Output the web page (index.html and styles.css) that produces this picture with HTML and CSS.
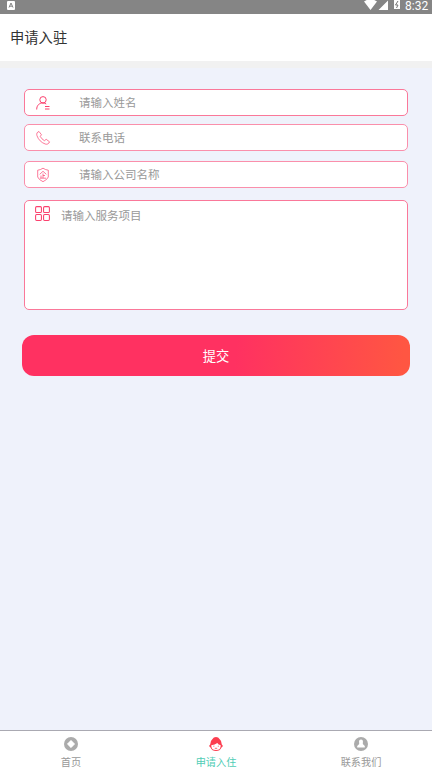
FILE: index.html
```html
<!DOCTYPE html>
<html lang="zh-CN">
<head>
<meta charset="utf-8">
<title>申请入驻</title>
<link rel="stylesheet" href="styles.css">
</head>
<body>
<div class="status">
  <svg class="app" width="8" height="9" viewBox="0 0 8 9"><rect width="8" height="9" rx="1" fill="#fff"/><path d="M2 6.500 4 2l2 4.500M2.800 5.200h2.400" fill="none" stroke="#858585"/></svg>
  <svg width="41" height="14" viewBox="0 0 41 14" class="signals">
    <path d="M0 1.500Q6.500-3 13 1.500L6.500 10zM14.500 10 24 .5V10z" fill="#fff"/>
    <path d="M30 0h6v9h-6z" fill="#fff"/><path d="m34 1-2.500 4H34l-1.500 3" fill="none" stroke="#777"/>
  </svg>
  <span class="time">8:32</span>
</div>
<header class="header">申请入驻</header>
<main class="main">
  <div class="field">
    <svg class="icon" viewBox="0 0 16 16"><circle cx="8" cy="4.800" r="3.200"/><path d="M1.700 14.500C1.700 10.500 4 8 8 8q2 0 3.200 1M10 11.500h4.500M10 14h4.500"/></svg>
    <span>请输入姓名</span>
  </div>
  <div class="field phone">
    <svg class="icon thin" viewBox="0 0 16 16"><path d="M4 1.500C2.200 2 1.200 3.500 2 5.800c1.500 4 4.200 6.700 8.200 8.200 2 .7 3.800-.3 4.300-2.200L11.200 9.300 9.400 10.700Q6.500 9 5.200 6.300L6.500 4.800z"/></svg>
    <span>联系电话</span>
  </div>
  <div class="field company">
    <svg class="icon thin" viewBox="0 0 16 16"><path d="M8 1.200q2.500 1.700 5.300 2v6.800Q12.500 12.500 8 14.700 3.500 12.500 2.700 10V3.200Q5.500 2.900 8 1.200zM4.700 7.300 8 4.300l3.300 3M8 6.500v4.500M8 8.500h2M6 8.500V11M4.900 11.200h6.200"/></svg>
    <span>请输入公司名称</span>
  </div>
  <div class="field service">
    <svg class="icon" viewBox="0 0 16 16"><rect x="1.500" y="1.500" width="5.500" height="5.500" rx="1"/><rect x="9" y="1.500" width="5.500" height="5.500" rx="1"/><rect x="1.500" y="9" width="5.500" height="5.500" rx="1"/><rect x="9" y="9" width="5.500" height="5.500" rx="1"/></svg>
    <span>请输入服务项目</span>
  </div>
  <button class="submit">提交</button>
</main>
<nav class="tabs">
  <div class="tab">
    <svg viewBox="0 0 14 14"><circle cx="7" cy="7" r="7" fill="#ababab"/><path d="M7 3.300 10.700 7 7 10.700 3.300 7z" fill="#fff" stroke="#fff" stroke-width=".6"/></svg>
    <span>首页</span>
  </div>
  <div class="tab active">
    <svg viewBox="0 0 14 14"><path d="M3.500 2Q4.500 0 7 0t3.500 2Q13 4 12.800 7.500L14 9l-1.500 1.500Q11 14 7 14t-5.500-3.500L0 9l1.200-1.500Q1 4 3.500 2z" fill="#fc3d4f"/><path d="M2.300 8.200Q6 8 8.300 6q1 1.700 3.400 2.200.3 4.900-4.700 4.900T2.300 8.200z" fill="#fff"/><path d="M4.300 9.200h1M8.800 9.200h1M5.800 11.300h2.400" stroke="#fc3d4f" fill="none" stroke-width=".8"/></svg>
    <span>申请入住</span>
  </div>
  <div class="tab">
    <svg viewBox="0 0 14 14"><circle cx="7" cy="7" r="7" fill="#ababab"/><path d="M7 2.500c-1.500 0-2.200 1.200-1.900 2.800l.1 1.700L3.200 9v1.500h7.600V9L8.800 7l.1-1.700C9.200 3.700 8.500 2.500 7 2.500z" fill="#fff"/></svg>
    <span>联系我们</span>
  </div>
</nav>
</body>
</html>
```
FILE: styles.css
```css
* { box-sizing: border-box; }
body {
  margin: 0;
  height: 770px;
  display: flex;
  flex-direction: column;
  background: #eff2fb;
  font-family: "Noto Sans CJK SC", sans-serif;
  overflow: hidden;
}
.status {
  height: 14px;
  flex: none;
  display: flex;
  background: #858585;
  color: #fff;
}
.app { margin: 1px 0 0 7px; }
.signals { margin-left: auto; flex: none; }
.time {
  width: 27px;
  height: 14px;
  font: 400 12px/14px Roboto, sans-serif;
  margin-top: -1px;
}
.header {
  height: 54px;
  flex: none;
  padding-left: 10px;
  background: #fff;
  border-bottom: 7px solid #f1f1f1;
  color: #333;
  font-size: 14.3px;
  line-height: 46px;
}
.main { flex: 1; padding: 21px 22px 0; }
.field {
  height: 27px;
  margin: 0 2px 8px;
  padding-left: 10px;
  display: flex;
  align-items: center;
  background: #fff;
  border: 1px solid #fa7899;
  border-radius: 5px;
  color: #999;
  font-size: 11.5px;
  line-height: 25px;
}
.phone { margin-bottom: 10px; border-color: #fa8fab; }
.company { margin-bottom: 12px; border-color: #fa8fab; }
.service { height: 110px; align-items: flex-start; }
.icon {
  width: 16px;
  height: 16px;
  margin-right: 28px;
  flex: none;
  fill: none;
  stroke: #fb416e;
  stroke-width: 1;
}
.thin { stroke-width: .7; }
.service .icon { width: 17px; height: 17px; margin: 4px 10px 0 -1px; }
.service span { line-height: 28px; }
.submit {
  display: block;
  width: 388px;
  height: 41px;
  margin-top: 25px;
  padding: 0;
  border: 0;
  border-radius: 12px;
  background: linear-gradient(95deg, #ff3161 0%, #ff3161 55%, #ff5642 98%);
  color: #fff;
  font: 13.3px/41px "Noto Sans CJK SC", sans-serif;
}
.tabs {
  height: 40px;
  flex: none;
  display: flex;
  background: #fff;
  border-top: 1px solid #aaa9b2;
}
.tab {
  flex: 1;
  display: flex;
  flex-direction: column;
  align-items: center;
  padding-top: 6px;
  color: #999;
  font-size: 10.2px;
  line-height: 14px;
}
.tab:first-child { margin-right: 1px; margin-left: -1px; }
.tab:last-child { margin-left: 1px; margin-right: -1px; }
.tab svg { width: 14px; height: 14px; margin-bottom: 4px; }
.active { color: #4fcdb5; }
```
